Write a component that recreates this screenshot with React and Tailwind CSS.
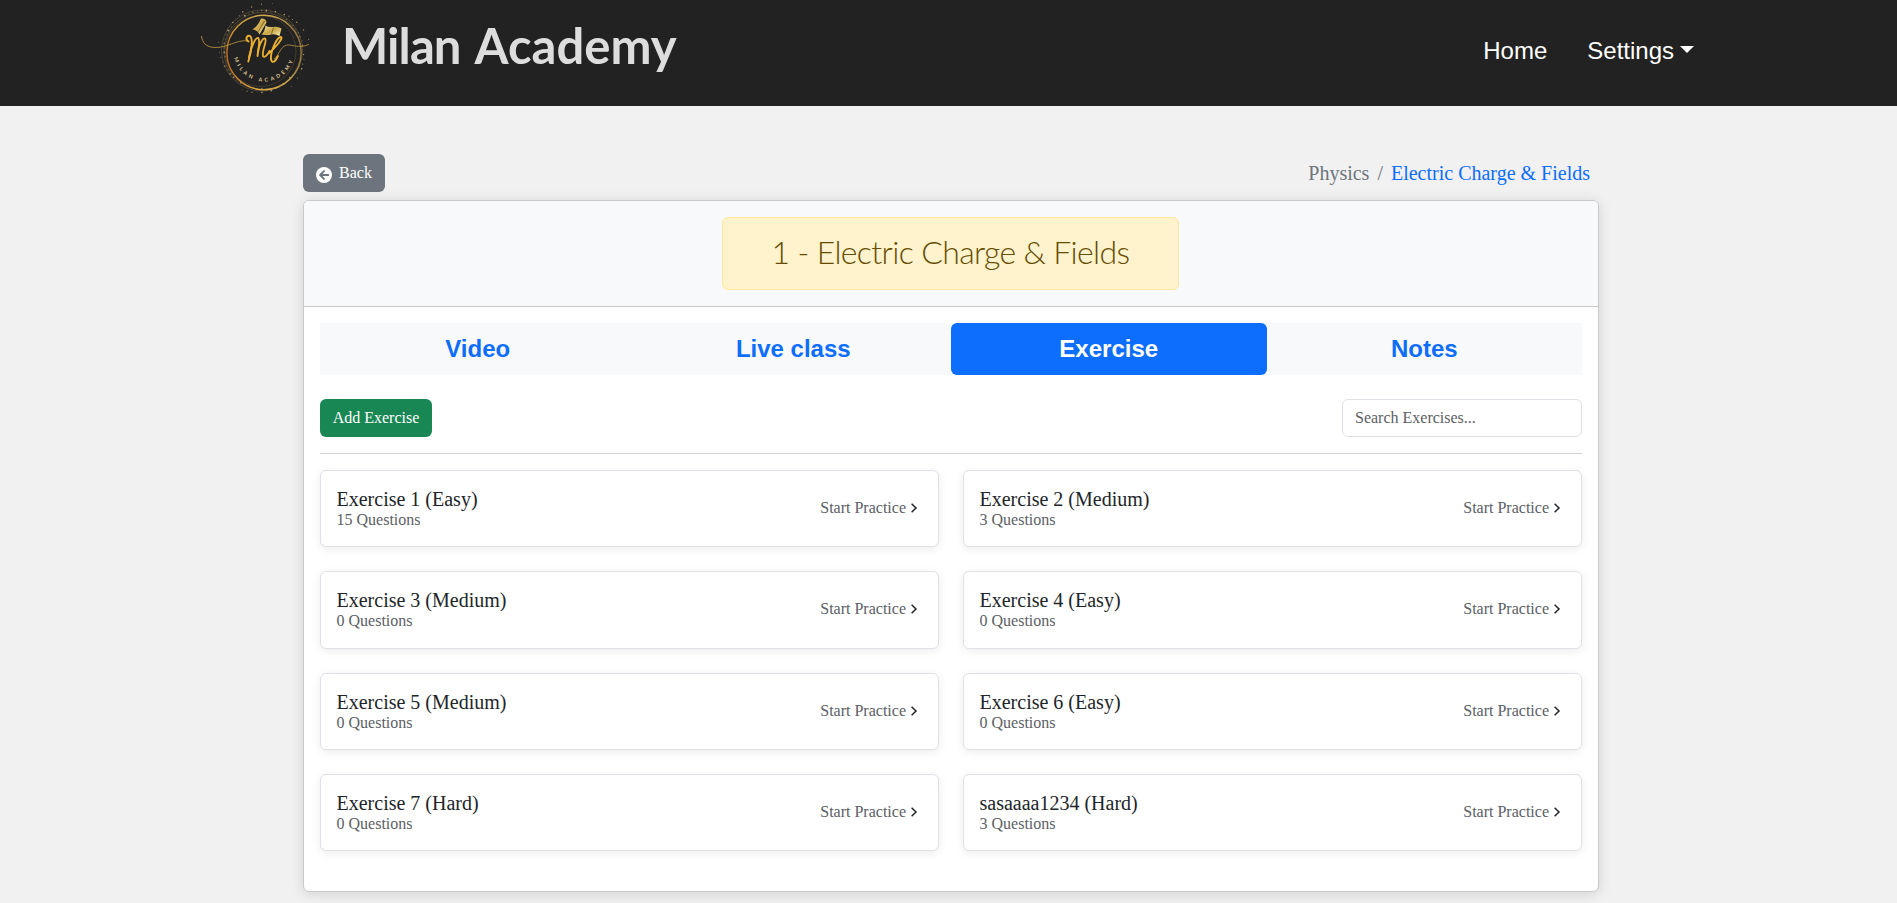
import React from "react";

const exercises = [
  { name: "Exercise 1 (Easy)", count: 15 },
  { name: "Exercise 2 (Medium)", count: 3 },
  { name: "Exercise 3 (Medium)", count: 0 },
  { name: "Exercise 4 (Easy)", count: 0 },
  { name: "Exercise 5 (Medium)", count: 0 },
  { name: "Exercise 6 (Easy)", count: 0 },
  { name: "Exercise 7 (Hard)", count: 0 },
  { name: "sasaaaa1234 (Hard)", count: 3 },
];

const tabs = ["Video", "Live class", "Exercise", "Notes"];

// Gold dust scattered around the ring, at repeatable positions.
const dust = Array.from({ length: 150 }, (_, i) => {
  const angle = i * 2.399;
  const radius = 38.5 + ((i * 37) % 23) * ((i * 13) % 10) * 0.045;
  return {
    x: 65 + Math.cos(angle) * radius,
    y: 50 + Math.sin(angle) * radius,
    r: 0.35 + ((i * 7) % 5) * 0.12,
    o: 0.3 + ((i * 11) % 6) * 0.1,
  };
});

function Logo() {
  return (
    <svg width="120" height="106" viewBox="0 0 120 106" className="block shrink-0">
      <defs>
        <linearGradient id="ring" x1="0" y1="0.6" x2="1" y2="0.4">
          <stop offset="0" stopColor="#c4701f" />
          <stop offset="0.3" stopColor="#e0ac42" />
          <stop offset="0.75" stopColor="#c9a34a" />
          <stop offset="1" stopColor="#8a713c" />
        </linearGradient>
        <linearGradient id="leaf" x1="0" y1="0" x2="1" y2="1">
          <stop offset="0" stopColor="#f8e9a0" />
          <stop offset="0.5" stopColor="#c9a544" />
          <stop offset="1" stopColor="#fbf0b4" />
        </linearGradient>
        <path id="arc" d="M35.5 51 A30.5 30.5 0 0 0 96.5 51" />
      </defs>
      {dust.map((d, i) => (
        <circle key={i} cx={d.x} cy={d.y} r={d.r} fill="#c9ab78" opacity={d.o} />
      ))}
      <circle cx="64" cy="50.5" r="40.5" fill="none" stroke="#8b7752" strokeWidth="0.5" opacity="0.8" />
      <circle cx="64.5" cy="51" r="38.6" fill="none" stroke="#8b7752" strokeWidth="0.5" opacity="0.8" />
      <circle cx="62.5" cy="51" r="35.5" fill="none" stroke="#8b7752" strokeWidth="0.5" opacity="0.6" />
      <circle cx="66" cy="52.5" r="37.2" fill="none" stroke="url(#ring)" strokeWidth="1.4" />
      <path d="M3.5 36 C5 50 20 49 32 44.5 C42 40.5 48 40 50.5 41.5" fill="none" stroke="#c79c3f" strokeWidth="0.8" />
      <path d="M76 59 C82 55 82 44 92 45 C100 47 107 47 111 44" fill="none" stroke="#b9923f" strokeWidth="0.8" />
      <path d="M63 18.5 Q68 18 68.5 22.5 L61.5 34.5 Q59.5 30 54.5 29.5 Q60 26 63 18.5 Z" fill="url(#leaf)" />
      <path d="M66.5 21 L60 32" stroke="#6b5426" strokeWidth="0.8" />
      <path d="M67.5 25.5 Q69.5 27.5 75 27 Q80 26 83.5 28.5 L81.5 36 Q77 33.5 73 34.5 Q69 35.5 63.5 34.5 Q67 31 67.5 25.5 Z" fill="url(#leaf)" />
      <path d="M75.5 27.5 L73.5 34" stroke="#6b5426" strokeWidth="0.8" />
      {/* Handwritten monogram strokes */}
      <g fill="none" stroke="#ebb02f" strokeLinecap="round" strokeLinejoin="round">
        <path d="M50.5 41.5 C46.5 39 49 34.8 52 36 C55 38 54 50 50.3 61.5" strokeWidth="1.9" />
        <path d="M51 57 C53 47 57.5 37 60.2 38 C62.5 40 60.5 48 59.5 56" strokeWidth="1.9" />
        <path d="M59.8 52 C61 45 64.5 37.5 67.2 38.5 C69.5 41 63.5 51 65 56 C66.5 58.5 69.5 55 71.5 51" strokeWidth="1.8" />
        <path d="M71 53 C76 49 87 37 82.5 37 C78 38 71 55 73.5 61 C75.5 63.5 78 60 80 56" strokeWidth="1.9" />
      </g>
      <text fill="#e0cb96" fontSize="5.2" fontWeight="700" fontFamily="Lato, sans-serif" letterSpacing="2.9">
        <textPath href="#arc" startOffset="7">MILAN ACADEMY</textPath>
      </text>
    </svg>
  );
}

function BackIcon() {
  return (
    <svg width="16" height="16" viewBox="0 0 16 16" fill="none" className="relative top-[2px] block">
      <circle cx="8" cy="8" r="8" fill="currentColor" />
      <path d="M12.3 8H4.6M8 4.1L4.1 8l3.9 3.9" stroke="#6c757d" strokeWidth="1.9" strokeLinecap="round" strokeLinejoin="round" />
    </svg>
  );
}

function ExerciseCard({ name, count }) {
  return (
    <div className="flex h-[77.33px] items-center justify-between rounded-[6px] border border-[#dee2e6] bg-white pr-[20px] pl-[15.5px] shadow-[0_2px_10px_rgba(0,0,0,0.08)]">
      <div className="pt-px">
        <div className="text-[20px] leading-[22px] text-[#212529]">{name}</div>
        <div className="text-[16px] leading-[20px] text-[#5b6065]">{count} Questions</div>
      </div>
      <div className="flex items-center gap-[4px] pb-px text-[16px] leading-[24px] text-[#5b6065]">
        <span>Start Practice</span>
        <svg width="8" height="10" viewBox="0 0 8 10" fill="none" stroke="#212529" strokeWidth="1.5">
          <path d="M1.6 0.8 L6 5 L1.6 9.2" />
        </svg>
      </div>
    </div>
  );
}

export default function App() {
  return (
    <div className="h-[903px] overflow-hidden bg-[#f1f1f1] font-['Liberation_Serif',serif]">
      <header className="flex h-[106px] bg-[#222222] pr-[203px] pl-[198px]">
        <Logo />
        <h1 className="flex gap-[14px] pt-[13px] pl-[24px] font-[Lato,sans-serif] text-[49px] leading-[64px] font-bold whitespace-nowrap text-[#dddddd]">
          <span className="tracking-[-0.9px]">Milan</span> <span>Academy</span>
        </h1>
        <nav className="ml-auto flex h-[102px] items-center gap-[40px] font-['Liberation_Sans',sans-serif] text-[24px] leading-[36px] text-white">
          <a>Home</a>
          <a className="flex items-center gap-[6px]">
            Settings
            <svg width="14" height="7" viewBox="0 0 14 7" className="relative -top-[2px]">
              <path d="M0 0H14L7 7Z" fill="white" />
            </svg>
          </a>
        </nav>
      </header>

      <main className="ml-[303px] w-[1296px] pt-[48px]">
        <div className="flex h-[38px] items-center justify-between">
          <button className="flex h-[38px] w-[82px] items-center gap-[7px] rounded-[6px] bg-[#6c757d] pl-[13px] text-[16px] leading-[24px] text-white">
            <BackIcon />
            <span>Back</span>
          </button>
          <div className="flex gap-[8px] pr-[9px] text-[20px] leading-[30px] text-[#6c757d]">
            <span>Physics</span>
            <span>/</span>
            <span className="text-[#0d6efd]">Electric Charge &amp; Fields</span>
          </div>
        </div>

        <section className="mt-[8px] h-[692px] rounded-[6px] border border-[#c8c9ca] bg-white shadow-[0_2px_14px_rgba(0,0,0,0.13)]">
          <div className="flex h-[106px] justify-center rounded-t-[5px] border-b border-[#c5c7c9] bg-[#f8f9fb] pt-[16px] pr-px">
            <div className="flex h-[73px] w-[457px] items-center justify-center rounded-[6px] border border-[#ffe69c] bg-[#fff3cd] pb-[3px] font-[Lato,sans-serif] text-[32px] leading-[38px] font-light tracking-[-0.65px] whitespace-nowrap text-[#664d03]">
              1 - Electric Charge &amp; Fields
            </div>
          </div>

          <div className="px-[16px] pt-[16px]">
            <div className="grid h-[52px] grid-cols-4 bg-[#f8f9fb] font-['Liberation_Sans',sans-serif] text-[24px] leading-[36px] font-bold">
              {tabs.map((t) => (
                <div
                  key={t}
                  className={
                    t === "Exercise"
                      ? "flex items-center justify-center rounded-[6px] bg-[#0d6efd] text-white"
                      : "flex items-center justify-center text-[#0d6efd]"
                  }
                >
                  {t}
                </div>
              ))}
            </div>

            <div className="mt-[24px] flex justify-between border-b border-[#d3d3d4] pb-[16px]">
              <button className="h-[38px] w-[112px] rounded-[6px] bg-[#198754] text-[16px] leading-[24px] text-white">
                Add Exercise
              </button>
              <input
                className="h-[38px] w-[240px] rounded-[6px] border border-[#dee2e6] bg-white px-[12px] text-[16px] leading-[24px] placeholder:text-[#5b6065]"
                placeholder="Search Exercises..."
              />
            </div>

            <div className="mt-[16px] grid grid-cols-2 gap-[24px]">
              {exercises.map((e) => (
                <ExerciseCard key={e.name} name={e.name} count={e.count} />
              ))}
            </div>
          </div>
        </section>
      </main>
    </div>
  );
}
